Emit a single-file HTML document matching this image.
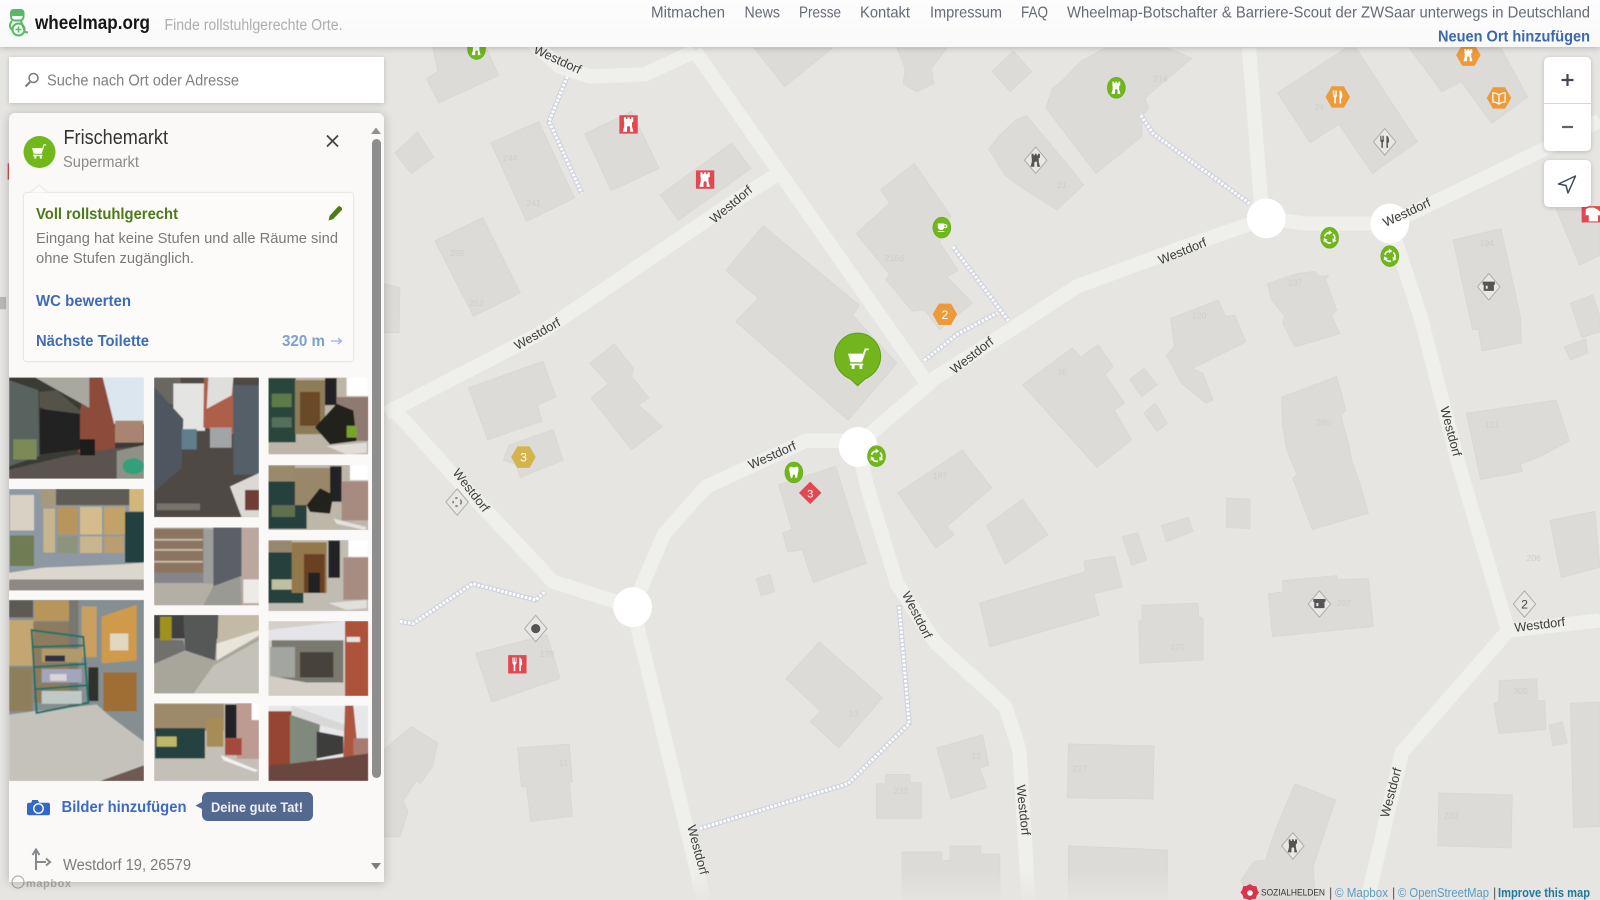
<!DOCTYPE html>
<html lang="de"><head><meta charset="utf-8"><title>Wheelmap</title>
<style>
html,body{margin:0;padding:0;width:1600px;height:900px;overflow:hidden;background:#e6e5e2;font-family:"Liberation Sans",sans-serif}
svg{position:absolute;left:0;top:0;display:block}
.b{position:absolute}
#hdr{left:0;top:0;width:1600px;height:47px;background:linear-gradient(#fdfdfd,#f9f9f9);box-shadow:0 1px 6px rgba(0,0,0,.22)}
#srch{left:9px;top:57px;width:375px;height:46px;background:#fff;box-shadow:0 1px 5px rgba(0,0,0,.18)}
#panel{left:9px;top:113px;width:375px;height:769px;background:#fbf9f8;border-radius:6px 6px 0 0;box-shadow:0 1px 10px rgba(0,0,0,.22)}
#card{left:23px;top:192px;width:331px;height:170px;box-sizing:border-box;border:1px solid #e9e7e5;border-radius:4px;background:#fcfbfa;box-shadow:0 0 3px rgba(0,0,0,.04)}
#zoom{left:1544px;top:57px;width:47px;height:94px;background:#fff;border-radius:5px;box-shadow:0 1px 5px rgba(0,0,0,.2)}
#zoom i{position:absolute;left:0;top:46px;width:47px;height:1px;background:#d6d6d6}
#loc{left:1544px;top:160px;width:47px;height:47px;background:#fff;border-radius:5px;box-shadow:0 1px 5px rgba(0,0,0,.2)}
</style></head><body>
<svg width="1600" height="900" viewBox="0 0 1568 882" preserveAspectRatio="none">
<defs>
<linearGradient id="fade" x1="0" y1="0" x2="0" y2="1"><stop offset="0" stop-color="#e6e5e2" stop-opacity="0"/><stop offset="1" stop-color="#e6e5e2" stop-opacity=".85"/></linearGradient>
<path id="tw" d="M-4.8-7.500h2.200v1.800h1.500v-1.800h2.200v1.800h1.500v-1.800h2.200v5h-1.300V2l1.500 5.500H1.600V3.500a1.600 1.800 0 0 0-3.200 0v4h-4.400L-4.500 2v-4.500h-.3z"/>
<g id="tower"><use href="#tw" fill="#fff"/></g>
<path id="fk" d="M-5-7v5.600c0 .9.5 1.600 1.200 1.900V7h1.700V.5c.7-.3 1.200-1 1.200-1.900V-7h-.8v4.600h-.7V-7h-.8v4.600h-.7V-7h-.8v4.600h-.7V-7zM2-7C4.500-7 5-3 5-1c0 1.500-.6 2.200-1.300 2.400V7H2z"/>
<g id="fork"><use href="#fk" fill="#fff"/></g>
<g id="arc"><path fill="none" stroke="#fff" stroke-width="1.600" d="M-4.800-1.300A5 5 0 0 1-.6-5"/><path fill="#fff" d="M-.8-7.300L2.600-5-.8-2.700z"/></g>
<g id="rec"><use href="#arc"/><use href="#arc" transform="rotate(120)"/><use href="#arc" transform="rotate(240)"/></g>
<g id="cup"><path fill="#fff" d="M-5-5H3v1h1.500a2.300 2.300 0 0 1 0 4.600H2.800C2 2.300.9 3-.8 3c-2.200 0-4.200-1.500-4.200-4zM3-2.800V-.8h1.300a1 1 0 0 0 0-2zM-5 4.200H3v1.300h-8z"/></g>
<g id="tooth"><path fill="#fff" d="M-3.500-7c1.300 0 2.400.8 3.500.8S2.300-7 3.500-7C5.500-7 6-4.600 5.600-2.500 5.200-.3 4.800 1.500 4.300 4.500 4 6.500 3.300 7 2.700 7 1.800 7 1.700 5.400 1.300 3.800 1 2.800.7 2.300 0 2.300s-1 .5-1.300 1.500C-1.700 5.400-1.800 7-2.700 7c-.6 0-1.300-.5-1.600-2.500C-4.800 1.500-5.200-.3-5.600-2.500-6-4.600-5.500-7-3.500-7z"/></g>
<g id="cart"><path fill="#fff" d="M-9.500-6.500H5.200L7-11.500h3.800V-9.700H8.300L4.300 2H-7zM-7.500 3.300H5.500V5H-7.500zM-5.800 5h2.700v3.500h-2.700zM1.800 5h2.700v3.500H1.800z"/></g>
<g id="pin"><ellipse rx="8.800" ry="10.200" fill="#70b71b" stroke="#64a818" stroke-width=".6"/></g>
<g id="hex"><path d="M-6-10.500H6L12 0 6 10.500H-6L-12 0z"/></g>
<g id="dia"><path fill="#e8e7e4" stroke="#aaa9a6" stroke-width=".9" d="M0-13L11 0 0 13-11 0z"/></g>
</defs>
<rect width="1568" height="882" fill="#e6e5e2"/>
<!-- buildings -->
<g fill="#dcdbd8" stroke="#d7d6d3" stroke-width=".7">
<polygon points="424,46 429,70 418,77 430,101 489,74 476,46"/>
<polygon points="387,150 409,129 425,154 403,170"/>
<polygon points="481,140 528,119 563,194 516,217"/>
<polygon points="573,131 619,109 646,165 599,187"/>
<polygon points="647,191 717,140 736,165 665,216"/>
<polygon points="426,236 473,213 510,287 464,310"/>
<polygon points="739,47 816,47 769,85"/>
<polygon points="879,47 928,47 913,67 915,82 898,90 885,82 887,67"/>
<polygon points="972,70 993,50 1011,70 990,90"/>
<polygon points="748,221 842,299 836,309 879,356 831,412 721,315 743,292 711,265"/>
<polygon points="896,160 932,212 921,238 939,265 928,271 953,297 921,323 906,304 894,305 868,274 872,269 839,229 872,199 863,186"/>
<polygon points="459,380 532,354 545,389 527,397 531,413 478,431"/>
<polygon points="578,356 602,337 621,361 619,369 636,390 626,397 649,418 619,441 579,390 596,376"/>
<polygon points="499,436 542,421 552,451 510,468 505,455 493,451"/>
<polygon points="969,146 980,132 995,118 1006,113 1045,160 1062,181 1036,206 1003,185 985,172"/>
<polygon points="1025,106 1031,87 1042,78 1059,60 1083,47 1145,47 1168,57 1122,96 1126,106 1119,114 1119,134 1074,170"/>
<polygon points="1252,91 1319,47 1329,47 1389,139 1345,170 1312,122 1284,140"/>
<polygon points="1381,47 1471,47 1497,95 1462,121 1432,80 1413,90"/>
<polygon points="1242,278 1271,268 1289,266 1293,271 1302,270 1299,274 1310,304 1305,309 1313,327 1287,335 1269,340 1257,317 1259,310 1246,294"/>
<polygon points="1147,312 1194,294 1201,310 1210,309 1221,335 1169,361 1179,366 1189,392 1182,395 1158,376 1143,348 1151,340"/>
<polygon points="1002,377 1051,341 1059,350 1076,338 1091,359 1083,367 1102,395 1092,402 1109,431 1075,458"/>
<polygon points="1107,372 1121,361 1134,377 1119,389"/>
<polygon points="1121,405 1132,395 1144,415 1134,423"/>
<polygon points="1256,389 1310,369 1319,402 1314,407 1323,441 1325,452 1333,475 1341,503 1286,519 1267,469 1271,465 1261,441 1257,418"/>
<polygon points="1424,235 1471,224 1490,310 1491,336 1452,344 1449,323 1443,323"/>
<polygon points="1539,297 1561,289 1568,310 1568,325 1550,331"/>
<polygon points="1533,340 1554,332 1556,346 1539,353"/>
<polygon points="1437,405 1525,392 1538,432 1510,447 1490,455 1492,462 1451,470"/>
<polygon points="1525,205 1548,260 1568,250 1568,205"/>
<polygon points="967,515 1002,489 1027,524 985,553"/>
<polygon points="880,483 943,441 972,478 928,516 935,524 917,537"/>
<polygon points="960,591 1064,560 1062,550 1092,545 1100,575 1072,582 1077,603 970,634"/>
<polygon points="1100,526 1115,522 1124,549 1109,554"/>
<polygon points="1138,515 1165,507 1169,521 1143,531"/>
<polygon points="1202,488 1225,489 1225,518 1202,517"/>
<polygon points="1119,593 1174,591 1175,604 1179,606 1179,647 1117,650 1116,609 1119,608"/>
<polygon points="1243,582 1257,580 1257,569 1310,564 1311,568 1341,567 1346,614 1247,624"/>
<polygon points="1519,510 1563,501 1568,556 1530,566"/>
<polygon points="1469,667 1506,665 1507,686 1514,687 1515,715 1469,719 1467,709 1464,689 1469,688"/>
<polygon points="1518,711 1531,707 1536,728 1522,731"/>
<polygon points="1539,689 1568,688 1568,810 1542,811"/>
<polygon points="1047,729 1131,731 1130,783 1046,782"/>
<polygon points="1410,777 1482,779 1481,831 1409,829"/>
<polygon points="1047,829 1144,833 1144,882 1047,882"/>
<polygon points="1269,768 1309,784 1287,849 1289,882 1225,882 1216,863 1229,844 1240,843 1250,813"/>
<polygon points="819,457 849,552 797,571 786,539 772,541 767,522 776,519 763,475"/>
<polygon points="741,567 755,563 759,580 746,584"/>
<polygon points="466,640 536,622 549,665 482,688"/>
<polygon points="803,629 865,684 822,733 794,707 804,697 770,665"/>
<polygon points="507,733 558,729 561,766 558,766 561,800 520,805 516,771 511,771"/>
<polygon points="376,735 403,712 429,728 424,751 412,768 408,765 395,785 400,795 392,820 376,820"/>
<polygon points="859,768 868,768 868,759 892,759 892,767 903,767 903,802 859,802"/>
<polygon points="918,733 963,720 969,750 960,753 967,772 932,783"/>
<polygon points="884,835 923,835 923,843 931,843 931,829 961,829 961,837 980,837 980,882 884,882"/>
<polygon points="377,278 392,282 391,326 377,326"/>
</g>
<!-- roads -->
<g fill="none" stroke="#efefec" stroke-width="14" stroke-linejoin="round" stroke-linecap="butt">
<polyline points="520,40 548,65 578,75 632,73 681,50"/>
<polyline points="681,50 906,372"/>
<polyline points="378,405 527,328 717,199 760,172"/>
<polyline points="845,432 917,370 980,330 1055,281 1160,242 1241,214"/>
<polyline points="1236,200 1224,47"/>
<polyline points="1241,214 1280,219 1362,219"/>
<polyline points="1362,219 1404,199 1512,147 1568,118"/>
<polyline points="1362,219 1392,310 1430,457 1478,618"/>
<polyline points="1478,618 1568,608"/>
<polyline points="1478,618 1374,737 1340,882"/>
<polyline points="841,432 790,432 692,477 651,523 620,595"/>
<polyline points="620,595 542,570 459,482 385,400"/>
<polyline points="620,595 690,882"/>
<polyline points="841,438 849,474 879,572 917,630 985,692 999,735 1008,882"/>
</g>
<!-- footpaths -->
<g fill="none" stroke-linejoin="round">
<g stroke="#cfd3de" stroke-width="5">
<polyline points="556,75 538,119 570,189"/><polyline points="1118,113 1130,131 1224,199"/>
<polyline points="934,242 988,314"/><polyline points="906,353 939,327 977,307"/>
<polyline points="392,609 405,611 463,572 525,588 534,580"/><polyline points="686,812 831,768 891,709 881,593"/>
</g>
<g stroke="#fff" stroke-width="3" stroke-dasharray="2.500 1.500">
<polyline points="556,75 538,119 570,189"/><polyline points="1118,113 1130,131 1224,199"/>
<polyline points="934,242 988,314"/><polyline points="906,353 939,327 977,307"/>
<polyline points="392,609 405,611 463,572 525,588 534,580"/><polyline points="686,812 831,768 891,709 881,593"/>
</g></g>
<g fill="#fff"><ellipse cx="841" cy="438" rx="19" ry="19.500"/><ellipse cx="620" cy="595" rx="19" ry="19.500"/><ellipse cx="1241" cy="214" rx="19" ry="19.500"/><ellipse cx="1362" cy="219" rx="19" ry="19.500"/></g>
<!-- house numbers -->
<g fill="#cfcecb" font-size="8.500" font-family="Liberation Sans,sans-serif">
<text x="493" y="158">244</text><text x="516" y="202">241</text><text x="460" y="300">252</text><text x="441" y="251">255</text>
<text x="867" y="256">216d</text><text x="1130" y="80">214</text><text x="1288" y="108">24</text><text x="1036" y="184">21</text>
<text x="1262" y="280">237</text><text x="1168" y="312">120</text><text x="1036" y="368">76</text><text x="1290" y="417">280</text>
<text x="1310" y="594">207</text><text x="1147" y="637">175</text><text x="1051" y="756">227</text><text x="1415" y="802">233</text>
<text x="1496" y="550">206</text><text x="1483" y="680">305</text><text x="1450" y="241">194</text><text x="1455" y="419">121</text>
<text x="914" y="469">187</text><text x="529" y="644">178</text><text x="832" y="702">13</text><text x="548" y="750">11</text><text x="876" y="778">232</text><text x="952" y="744">12</text>
</g>
<!-- street labels -->
<g fill="#3c3c3c" font-size="12.500" font-family="Liberation Sans,sans-serif" text-anchor="middle" stroke="#efefec" stroke-width="1" paint-order="stroke" dominant-baseline="middle">
<text transform="translate(546,59) rotate(25)">Westdorf</text>
<text transform="translate(717,201) rotate(-40)">Westdorf</text>
<text transform="translate(527,328) rotate(-30)">Westdorf</text>
<text transform="translate(757,447) rotate(-24)">Westdorf</text>
<text transform="translate(953,349) rotate(-38)">Westdorf</text>
<text transform="translate(1159,247) rotate(-22)">Westdorf</text>
<text transform="translate(1379,209) rotate(-25)">Westdorf</text>
<text transform="translate(461,481) rotate(52)">Westdorf</text>
<text transform="translate(898,603) rotate(63)">Westdorf</text>
<text transform="translate(1421,423) rotate(75)">Westdorf</text>
<text transform="translate(1509,613) rotate(-7)">Westdorf</text>
<text transform="translate(1364,777) rotate(-75)">Westdorf</text>
<text transform="translate(1002,794) rotate(84)">Westdorf</text>
<text transform="translate(683,833) rotate(75)">Westdorf</text>
</g>
<rect x="680" y="852" width="470" height="30" fill="url(#fade)"/>
<!-- green pins -->
<g><use href="#pin" x="467" y="48"/><use href="#tower" transform="translate(467,48) scale(.8)"/>
<use href="#pin" x="1094" y="86"/><use href="#tower" transform="translate(1094,86) scale(.8)"/>
<use href="#pin" x="923" y="223"/><use href="#cup" transform="translate(923,223) scale(.8)"/>
<use href="#pin" x="1303" y="233"/><use href="#rec" x="1303" y="233"/>
<use href="#pin" x="1362" y="251"/><use href="#rec" x="1362" y="251"/>
<use href="#pin" x="859" y="447"/><use href="#rec" x="859" y="447"/>
<use href="#pin" x="778" y="463"/><use href="#tooth" transform="translate(778,463) scale(.8)"/></g>
<!-- red -->
<g fill="#e2484f"><rect x="607" y="113" width="18" height="18" rx=".5"/><rect x="682" y="167" width="18" height="18" rx=".5"/><rect x="498" y="642" width="18" height="18" rx=".5"/>
<rect x="1550" y="202" width="18" height="16"/><path d="M794 472l11 11-11 11-11-11z"/></g>
<use href="#tower" transform="translate(616,122) scale(.95)"/><use href="#tower" transform="translate(691,176) scale(.95)"/><use href="#fork" transform="translate(507,651) scale(.95)"/>
<path fill="#fff" d="M1553 205l3-1.500h5l3 1.500 4 3v3h-3v6h-9v-6h-3z" transform="translate(1,0)"/>
<text x="794" y="487.500" fill="#fff" font-size="11" text-anchor="middle" font-family="Liberation Sans,sans-serif">3</text>
<!-- hexes -->
<g fill="#ec9a3a"><use href="#hex" transform="translate(926,308)"/><use href="#hex" transform="translate(1311,95)"/><use href="#hex" transform="translate(1469,96)"/><use href="#hex" transform="translate(1439,54)"/></g>
<use href="#hex" transform="translate(513,448)" fill="#d4b44d"/>
<text x="926" y="312.500" fill="#fff" font-size="12" text-anchor="middle" font-family="Liberation Sans,sans-serif">2</text>
<text x="513" y="452.500" fill="#fff" font-size="12" text-anchor="middle" font-family="Liberation Sans,sans-serif">3</text>
<use href="#fork" transform="translate(1311,95) scale(.9)"/><use href="#tower" transform="translate(1439,54) scale(.8)"/>
<path fill="none" stroke="#fff" stroke-width="1.200" d="M1463 91c2 0 4 .5 6 2 2-1.500 4-2 6-2v9c-2 0-4 .5-6 2-2-1.500-4-2-6-2zM1469 93v9"/>
<!-- diamonds -->
<use href="#dia" x="448" y="492"/><g transform="translate(448,492) scale(.8)"><circle r="5" fill="none" stroke="#666" stroke-width="1.600" stroke-dasharray="3 4"/></g>
<use href="#dia" x="525" y="616"/><circle cx="525" cy="616" r="4.500" fill="#555"/>
<use href="#dia" x="1015" y="157"/><use href="#tw" fill="#555" transform="translate(1015,157) scale(.85)"/>
<use href="#dia" x="1357" y="139"/><use href="#fk" fill="#555" transform="translate(1357,139) scale(.85)"/>
<use href="#dia" x="1459" y="281"/><path fill="#555" d="M1453 276h12v3h-1v6h-10v-6h-1zM1456 280v3h2v-3z"/>
<use href="#dia" x="1293" y="592"/><path fill="#555" d="M1287 587h12v3h-1v6h-10v-6h-1zM1290 591v3h2v-3z"/>
<use href="#dia" x="1494" y="592"/><text x="1494" y="596.500" fill="#444" font-size="12" text-anchor="middle" font-family="Liberation Sans,sans-serif">2</text>
<use href="#dia" x="1267" y="829"/><use href="#tw" fill="#555" transform="translate(1267,829) scale(.85)"/>
<!-- main pin -->
<path fill="#72b51d" stroke="#5f9c1c" stroke-width="1" d="M840.500 378l-7-6.500C824 367.500 818 359 818 349.500 818 337 828 326.500 840.500 326.500S863 337 863 349.500C863 359 857 367.500 847.500 371.500z"/>
<use href="#cart" transform="translate(840.500,353)"/>
<rect x="0" y="291" width="6" height="12" fill="#b9b8b5"/>
<rect x="7.500" y="160" width="1.500" height="16" fill="#e2484f"/>
</svg>
<div class="b" id="hdr"></div><div class="b" id="srch"></div><div class="b" id="panel"></div><div class="b" id="card"></div>
<div class="b" id="zoom"><i></i></div><div class="b" id="loc"></div>
<svg width="1600" height="900" viewBox="0 0 1600 900" font-family="Liberation Sans,sans-serif">
<defs><filter id="soft" x="-5%" y="-5%" width="110%" height="110%"><feGaussianBlur stdDeviation="1.200"/></filter></defs>
<!-- logo -->
<g fill="none" stroke="#59b867" stroke-width="2">
<rect x="11" y="10" width="12.500" height="10.500" rx="3.500"/><rect x="11" y="10" width="12.500" height="5" rx="2.500" fill="#59b867"/>
<path d="M12 21c-3 3-2.500 7 .5 9M21 21l4 11 3 .5"/>
<circle cx="18.500" cy="29.500" r="6"/><path d="M18.500 26.500v6M15.500 29.500h6" stroke-width="1.500"/>
</g>
<text x="35" y="29" font-size="19" font-weight="700" fill="#161616" textLength="115" lengthAdjust="spacingAndGlyphs">wheelmap.org</text>
<text x="164.500" y="30" font-size="15.500" fill="#aeaeae" textLength="178" lengthAdjust="spacingAndGlyphs">Finde rollstuhlgerechte Orte.</text>
<!-- nav -->
<g font-size="16" fill="#656b75">
<text x="651" y="17.500" textLength="74" lengthAdjust="spacingAndGlyphs">Mitmachen</text>
<text x="744.500" y="17.500" textLength="35.500" lengthAdjust="spacingAndGlyphs">News</text>
<text x="799" y="17.500" textLength="42" lengthAdjust="spacingAndGlyphs">Presse</text>
<text x="860" y="17.500" textLength="50" lengthAdjust="spacingAndGlyphs">Kontakt</text>
<text x="930" y="17.500" textLength="72" lengthAdjust="spacingAndGlyphs">Impressum</text>
<text x="1021" y="17.500" textLength="27" lengthAdjust="spacingAndGlyphs">FAQ</text>
<text x="1067" y="17.500" textLength="523" lengthAdjust="spacingAndGlyphs">Wheelmap-Botschafter &amp; Barriere-Scout der ZWSaar unterwegs in Deutschland</text>
</g>
<text x="1438" y="41.500" font-size="15.500" font-weight="700" fill="#3a68b0" textLength="152" lengthAdjust="spacingAndGlyphs">Neuen Ort hinzufügen</text>
<!-- search -->
<g fill="none" stroke="#777" stroke-width="1.500"><circle cx="33.500" cy="78" r="4.500"/><path d="M30 82l-4.500 4.500" stroke-width="2"/></g>
<text x="47" y="85.500" font-size="15.500" fill="#808080" textLength="192" lengthAdjust="spacingAndGlyphs">Suche nach Ort oder Adresse</text>
<!-- panel head -->
<circle cx="39.500" cy="152" r="16" fill="#72b81a"/>
<path fill="#fff" transform="translate(38.500,152.500) scale(.72)" d="M-9-6H5.200L7-11.300h3.600V-9.700H8.200L4.300 1.800H-6.800zM-7.500 3.200H5.500V5H-7.500zM-5.800 5h2.700v3.500h-2.700zM1.800 5h2.700v3.500H1.800z"/>
<text x="63.500" y="144" font-size="20" fill="#333" textLength="104.500" lengthAdjust="spacingAndGlyphs">Frischemarkt</text>
<text x="63" y="167" font-size="15.500" fill="#8a8a8a" textLength="76" lengthAdjust="spacingAndGlyphs">Supermarkt</text>
<path d="M327 135.500l11 11M338 135.500l-11 11" stroke="#444" stroke-width="1.800" fill="none"/>
<path d="M39 185l8 7.500H31z" fill="#fcfbfa"/><path d="M31 192l8-7 8 7" fill="none" stroke="#e9e7e5"/>
<!-- scrollbar -->
<path d="M371 134l5-6.500 5 6.500z" fill="#8f8f8f"/><path d="M371 869l5 6.500 5-6.500z" transform="translate(0,-6)" fill="#7f7f7f"/>
<rect x="372" y="139" width="9" height="639" rx="4.500" fill="#8e8e8e"/>
<!-- card -->
<text x="36" y="219" font-size="15.500" font-weight="700" fill="#4c7a16" textLength="142" lengthAdjust="spacingAndGlyphs">Voll rollstuhlgerecht</text>
<path fill="#4c7a16" d="M328.500 220.500l1.200-4.800 8.200-9c.8-.8 2-.8 2.700 0l1 1c.7.800.7 1.900 0 2.600l-8.500 8.800z"/>
<text x="36" y="243" font-size="15" fill="#7a7a7a" textLength="302" lengthAdjust="spacingAndGlyphs">Eingang hat keine Stufen und alle Räume sind</text>
<text x="36" y="263" font-size="15" fill="#7a7a7a" textLength="158" lengthAdjust="spacingAndGlyphs">ohne Stufen zugänglich.</text>
<text x="36" y="306" font-size="15.500" font-weight="700" fill="#3d6bb8" textLength="95" lengthAdjust="spacingAndGlyphs">WC bewerten</text>
<text x="36" y="346" font-size="15.500" font-weight="700" fill="#3d6bb8" textLength="113" lengthAdjust="spacingAndGlyphs">Nächste Toilette</text>
<text x="282" y="346" font-size="15.500" font-weight="700" fill="#7e9fd2" textLength="43" lengthAdjust="spacingAndGlyphs">320 m</text>
<path d="M331 341h10M338 338l3.500 3-3.500 3" fill="none" stroke="#9ab4dc" stroke-width="1.300"/>
<!-- photos (drawn in a 3x working grid) -->
<g transform="translate(0,370) scale(.33333,.33784)">
<svg x="27" y="22" width="405" height="300" viewBox="27 22 405 300"><g filter="url(#soft)">
<rect x="27" y="22" width="405" height="300" fill="#3a3b36"/>
<polygon points="305,22 432,22 432,160 340,160" fill="#dbe6ee"/>
<polygon points="265,22 308,22 345,170 345,235 235,245 240,120" fill="#8d4b3b"/>
<rect x="345" y="150" width="85" height="65" fill="#a98470"/>
<polygon points="105,22 268,22 268,112 170,58" fill="#a9a89f"/>
<polygon points="27,30 115,60 118,255 27,285" fill="#59645f"/>
<rect x="40" y="205" width="70" height="60" fill="#7d8a58"/>
<polygon points="118,65 170,60 240,120 235,150 118,110" fill="#55534a"/>
<polygon points="120,115 240,130 240,235 120,250" fill="#242420"/>
<polygon points="27,295 200,255 345,232 432,225 432,322 27,322" fill="#5a5350"/>
<polygon points="350,240 432,222 432,322 350,322" fill="#8f9188"/>
<ellipse cx="400" cy="285" rx="32" ry="24" fill="#33a07a"/>
<rect x="240" y="205" width="45" height="48" fill="#1e1e1e"/>
</g></svg>
<svg x="27" y="352" width="405" height="301" viewBox="27 352 405 301"><g filter="url(#soft)">
<rect x="27" y="352" width="405" height="301" fill="#8d98a2"/>
<rect x="30" y="370" width="72" height="105" fill="#d9d2c4"/><rect x="30" y="490" width="72" height="90" fill="#6f7c52"/>
<rect x="130" y="410" width="35" height="130" fill="#c7b58e"/><rect x="122" y="352" width="45" height="55" fill="#a59a80"/>
<rect x="168" y="352" width="264" height="48" fill="#5f5c54"/>
<rect x="172" y="405" width="62" height="82" fill="#b8955c"/><rect x="240" y="405" width="66" height="82" fill="#d4bc8c"/><rect x="312" y="405" width="64" height="82" fill="#c2a267"/>
<rect x="172" y="492" width="60" height="50" fill="#8d947c"/><rect x="240" y="492" width="66" height="50" fill="#c8b68f"/><rect x="312" y="492" width="60" height="50" fill="#b89e70"/>
<rect x="388" y="352" width="44" height="66" fill="#d3b67c"/><rect x="375" y="420" width="57" height="150" fill="#24403f"/>
<polygon points="27,600 130,585 370,575 432,570 432,622 27,625" fill="#dbd6ce"/>
<rect x="27" y="620" width="405" height="33" fill="#8e8884"/>
</g></svg>
<svg x="27" y="680" width="405" height="537" viewBox="27 680 405 537"><g filter="url(#soft)">
<rect x="27" y="680" width="405" height="537" fill="#858f92"/>
<rect x="27" y="682" width="72" height="50" fill="#5c5a52"/><rect x="102" y="682" width="105" height="60" fill="#b8965a"/>
<rect x="27" y="740" width="75" height="135" fill="#c4a672"/><rect x="100" y="745" width="120" height="240" fill="#8c7c5e"/>
<rect x="27" y="880" width="70" height="130" fill="#8f7e5c"/><rect x="207" y="682" width="28" height="330" fill="#77766f"/>
<rect x="245" y="700" width="45" height="150" fill="#c9a05e"/><polygon points="305,730 410,695 410,860 305,868" fill="#d09a4c"/>
<rect x="330" y="780" width="55" height="50" fill="#e0d8c2"/><rect x="310" y="895" width="100" height="115" fill="#9e6e34"/>
<rect x="265" y="880" width="30" height="100" fill="#2f302c"/>
<polygon points="27,1020 100,1010 290,990 330,1025 432,1100 432,1217 27,1217" fill="#c5c1bb"/>
<polygon points="300,1217 432,1170 432,1217" fill="#6c5a52"/>
<g fill="none" stroke="#1f6f68" stroke-width="6"><polygon points="95,770 250,790 265,985 110,1015"/><path d="M100 820l155-5M100 880l160-10M105 945l158-12"/></g>
<rect x="125" y="825" width="120" height="40" fill="#b09a6c"/><rect x="125" y="885" width="120" height="40" fill="#a3a6b8"/><rect x="125" y="950" width="120" height="38" fill="#bfcac6"/>
<rect x="135" y="845" width="60" height="18" fill="#2d2f44"/><rect x="150" y="900" width="50" height="20" fill="#d8d4d8"/>
</g></svg>
<svg x="462" y="22" width="315" height="414" viewBox="462 22 315 414"><g filter="url(#soft)">
<rect x="462" y="22" width="315" height="414" fill="#4f4a44"/>
<rect x="462" y="22" width="80" height="80" fill="#6a6660"/>
<rect x="520" y="40" width="95" height="140" fill="#e4e4e2"/>
<polygon points="462,50 550,145 545,290 462,360" fill="#4f565e"/>
<polygon points="612,22 700,22 700,190 610,170" fill="#ad5f49"/>
<polygon points="625,22 700,22 695,75 620,115" fill="#dededc"/>
<rect x="700" y="45" width="77" height="265" fill="#545e67"/>
<rect x="545" y="175" width="45" height="60" fill="#5f7f8e"/><rect x="630" y="170" width="65" height="60" fill="#a2a4a6"/>
<polygon points="690,345 777,305 777,436 725,436" fill="#dcd9d5"/><rect x="735" y="355" width="42" height="60" fill="#6e3e36"/>
<rect x="470" y="395" width="130" height="20" fill="#77726a"/>
</g></svg>
<svg x="462" y="466" width="315" height="231" viewBox="462 466 315 231"><g filter="url(#soft)">
<rect x="462" y="466" width="315" height="231" fill="#b3afa4"/>
<rect x="462" y="470" width="150" height="160" fill="#8c7560"/>
<g fill="#c9c0ae"><rect x="462" y="500" width="146" height="5"/><rect x="462" y="530" width="146" height="5"/><rect x="462" y="565" width="146" height="5"/></g>
<rect x="462" y="600" width="150" height="30" fill="#86868a"/>
<rect x="610" y="472" width="30" height="160" fill="#9c9e9c"/><polygon points="640,466 725,466 725,610 640,640" fill="#5b6166"/>
<polygon points="640,640 722,610 725,697 610,697" fill="#9a9a94"/>
<rect x="725" y="466" width="52" height="231" fill="#bca79f"/><rect x="730" y="620" width="47" height="70" fill="#eeeae8"/>
</g></svg>
<svg x="462" y="725" width="315" height="233" viewBox="462 725 315 233"><g filter="url(#soft)">
<rect x="462" y="725" width="315" height="233" fill="#a8a59b"/>
<rect x="462" y="725" width="195" height="70" fill="#3f4141"/><polygon points="550,725 655,725 645,860 555,830" fill="#565959"/>
<polygon points="462,795 550,800 555,830 462,870" fill="#6f706c"/>
<rect x="480" y="730" width="35" height="70" fill="#a1901a"/>
<polygon points="655,725 777,725 777,790 650,860" fill="#c2b9a6"/><polygon points="650,810 777,770 777,785 650,860" fill="#e8e4dc"/>
<polygon points="640,875 777,800 777,958 580,958" fill="#c4c1b8"/>
</g></svg>
<svg x="462" y="986" width="315" height="231" viewBox="462 986 315 231"><g filter="url(#soft)">
<rect x="462" y="986" width="315" height="231" fill="#c4c0b8"/>
<rect x="462" y="988" width="210" height="80" fill="#9e8a6a"/>
<rect x="465" y="1060" width="150" height="90" fill="#26423f"/><rect x="470" y="1085" width="60" height="30" fill="#c0b76a"/><rect x="620" y="1030" width="50" height="85" fill="#a88c58"/>
<rect x="675" y="990" width="35" height="100" fill="#222227"/><rect x="710" y="986" width="67" height="165" fill="#bd9a92"/>
<rect x="755" y="986" width="22" height="50" fill="#fff"/><rect x="675" y="1090" width="50" height="50" fill="#a6483c"/>
<polygon points="662,1140 775,1185 765,1190 670,1155" fill="#f0f0f0"/>
</g></svg>
<svg x="805" y="22" width="300" height="228" viewBox="805 22 300 228"><g filter="url(#soft)">
<rect x="805" y="22" width="300" height="228" fill="#bdb6a8"/>
<rect x="805" y="24" width="82" height="190" fill="#29443a"/><rect x="815" y="70" width="60" height="40" fill="#5f7a48"/><rect x="815" y="140" width="60" height="30" fill="#54705a"/>
<rect x="885" y="30" width="90" height="160" fill="#8d7b58"/><rect x="900" y="65" width="60" height="100" fill="#6a4a28"/>
<rect x="975" y="24" width="35" height="80" fill="#222327"/><rect x="1040" y="22" width="65" height="55" fill="#fff"/><rect x="1010" y="80" width="95" height="130" fill="#8f7a72"/>
<polygon points="945,170 1010,100 1060,120 1070,210 990,220" fill="#22211f"/><rect x="1040" y="165" width="30" height="35" fill="#79a32c"/>
<polygon points="980,225 1100,215 1100,245 1040,250" fill="#e0ddd8"/>
</g></svg>
<svg x="805" y="281" width="300" height="193" viewBox="805 281 300 193"><g filter="url(#soft)">
<rect x="805" y="281" width="300" height="193" fill="#bdb7aa"/>
<rect x="805" y="283" width="80" height="50" fill="#998a6c"/><rect x="805" y="330" width="115" height="140" fill="#27403e"/><rect x="815" y="400" width="70" height="35" fill="#5f6f50"/><rect x="885" y="290" width="105" height="110" fill="#99876a"/>
<rect x="990" y="285" width="35" height="105" fill="#232328"/><rect x="1050" y="281" width="55" height="45" fill="#fff"/><rect x="1025" y="330" width="80" height="115" fill="#a78a80"/>
<polygon points="920,400 960,350 1000,370 990,425 930,420" fill="#23221f"/>
<polygon points="1000,440 1100,465 1095,474 1010,455" fill="#e5e2de"/>
</g></svg>
<svg x="805" y="503" width="300" height="211" viewBox="805 503 300 211"><g filter="url(#soft)">
<rect x="805" y="503" width="300" height="211" fill="#c0bcb2"/>
<rect x="805" y="505" width="70" height="40" fill="#96886e"/><rect x="805" y="540" width="105" height="150" fill="#27413e"/><rect x="815" y="620" width="80" height="30" fill="#c0c0a0"/>
<rect x="875" y="510" width="105" height="150" fill="#93784c"/><rect x="912" y="545" width="62" height="115" fill="#6a3f20"/><rect x="925" y="600" width="35" height="60" fill="#222"/>
<rect x="985" y="505" width="35" height="110" fill="#222227"/><rect x="1045" y="503" width="60" height="50" fill="#fff"/><rect x="1030" y="555" width="75" height="125" fill="#a78c82"/>
<polygon points="985,690 1100,680 1100,705 1040,710" fill="#e3e0dc"/>
</g></svg>
<svg x="805" y="743" width="300" height="222" viewBox="805 743 300 222"><g filter="url(#soft)">
<rect x="805" y="743" width="300" height="222" fill="#d4d0c8"/>
<polygon points="805,770 1035,743 1035,800 805,800" fill="#e5e5e9"/>
<rect x="815" y="800" width="215" height="125" fill="#7a796e"/><rect x="810" y="820" width="75" height="90" fill="#a3a6a0"/><rect x="900" y="835" width="100" height="75" fill="#46423b"/>
<rect x="1035" y="743" width="70" height="222" fill="#ad533b"/><rect x="1040" y="790" width="40" height="15" fill="#e7e5e0"/>
<polygon points="805,905 1035,945 1035,965 805,965" fill="#d2cdc5"/>
</g></svg>
<svg x="805" y="993" width="300" height="224" viewBox="805 993 300 224"><g filter="url(#soft)">
<rect x="805" y="993" width="300" height="224" fill="#e7e8ea"/>
<rect x="805" y="1010" width="70" height="160" fill="#954432"/><polygon points="875,993 1035,1050 1035,1070 875,1030" fill="#d8d8d6"/>
<polygon points="870,1020 960,1050 950,1155 870,1165" fill="#7f8a7c"/><polygon points="950,1070 1030,1085 1030,1135 950,1150" fill="#3e3e3a"/>
<polygon points="1035,993 1060,993 1075,1140 1030,1145" fill="#ad5540"/><rect x="1060" y="1090" width="45" height="50" fill="#a67b70"/>
<polygon points="805,1170 870,1165 1030,1145 1105,1135 1105,1217 805,1217" fill="#694641"/>
</g></svg>
</g>
<!-- add photos -->
<path fill="#3368c6" d="M27 804.500c0-1 .8-1.800 1.800-1.800h2.400l1-2.700h5.500l1.500 2.700h9c1 0 1.800.8 1.800 1.800v9c0 1-.8 1.800-1.800 1.800H28.800c-1 0-1.800-.8-1.800-1.800z"/>
<circle cx="38.500" cy="808.500" r="4.700" fill="none" stroke="#fff" stroke-width="1.400"/>
<text x="61.500" y="812" font-size="16" font-weight="700" fill="#3d6bc4" textLength="125" lengthAdjust="spacingAndGlyphs">Bilder hinzufügen</text>
<path fill="#54698f" d="M208 792h99a6 6 0 0 1 6 6v17a6 6 0 0 1-6 6h-99a6 6 0 0 1-6-6v-6l-6.500-3.500 6.500-3.500v-4a6 6 0 0 1 6-6z"/>
<text x="211" y="812" font-size="14" font-weight="700" fill="#eef0f5" textLength="92" lengthAdjust="spacingAndGlyphs">Deine gute Tat!</text>
<path d="M36 870v-19M32.500 855l3.500-5.500 3.500 5.500M36 862h10M46 858.500l4 3.500-4 3.500" fill="none" stroke="#85898f" stroke-width="2"/>
<text x="63" y="870" font-size="15.500" fill="#7b7b7b" textLength="128" lengthAdjust="spacingAndGlyphs">Westdorf 19, 26579</text>
<!-- bottom mapbox logo -->
<g opacity=".4"><circle cx="18" cy="882" r="6" fill="none" stroke="#444" stroke-width="1.200"/><text x="26" y="887" font-size="11" font-weight="700" fill="#555" textLength="45">mapbox</text></g>
<!-- controls -->
<path d="M1567.500 74v12M1561.500 80h12" stroke="#3f4a55" stroke-width="2.200" fill="none"/>
<path d="M1562 127h11" stroke="#5a646e" stroke-width="2.200" fill="none"/>
<path d="M1575.500 176l-17 8 7.500 1.500 2 7.500z" fill="none" stroke="#3f4a55" stroke-width="1.500" stroke-linejoin="round"/>
<!-- attribution -->
<path fill="#d8344a" d="M1250 885l3 2 3.500.3 .8 3.500 1.700 2.800-2.200 2.700-.8 3.400-3.500.3-2.500 1.500-3-1.500-3.500-.5-.7-3.300-2.300-2.800 1.900-2.900.7-3.300 3.500-.3z" transform="translate(0,-1)"/>
<circle cx="1250" cy="893" r="2.800" fill="#fff"/>
<text x="1261" y="895.500" font-size="9.500" fill="#333" textLength="64" lengthAdjust="spacingAndGlyphs">SOZIALHELDEN</text>
<text x="1329" y="897" font-size="12.500" fill="#555">|</text>
<text x="1335" y="897" font-size="12.500" fill="#5b9dc2" textLength="53" lengthAdjust="spacingAndGlyphs">© Mapbox</text>
<text x="1392" y="897" font-size="12.500" fill="#555">|</text>
<text x="1398" y="897" font-size="12.500" fill="#5b9dc2" textLength="91" lengthAdjust="spacingAndGlyphs">© OpenStreetMap</text>
<text x="1493" y="897" font-size="12.500" fill="#555">|</text>
<text x="1498" y="897" font-size="12.500" font-weight="700" fill="#1f7a9e" textLength="92" lengthAdjust="spacingAndGlyphs">Improve this map</text>
</svg>
</body></html>
